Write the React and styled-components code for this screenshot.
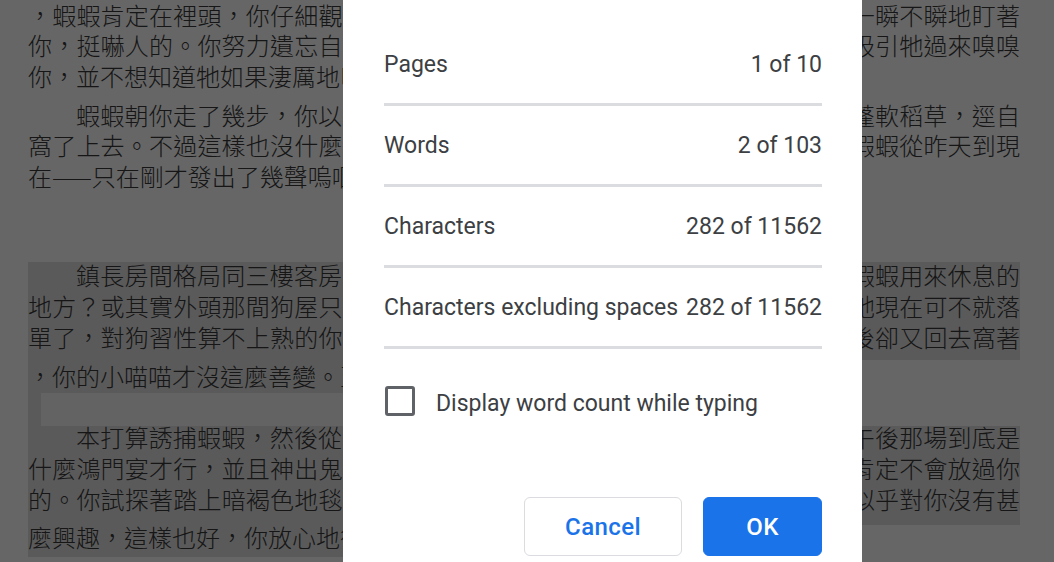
import React from 'react'
import styled, { createGlobalStyle } from 'styled-components'

const GlobalStyle = createGlobalStyle`
  html, body {
    margin: 0;
    padding: 0;
    width: 100%;
    height: 100%;
    overflow: hidden;
    background: #fff;
  }
`

const HIGHLIGHT = '#e1e1e1'
const BLANK = '#f8f8f8'

const Page = styled.div`
  padding-left: 28px;
  width: 992px;
  font-family: "Noto Sans CJK TC", "Noto Sans CJK JP", sans-serif;
  font-size: 24px;
  font-weight: 300;
  color: #383838;
`
const Paragraph = styled.div`
  margin-top: ${props => props.$gap}px;
`
const Line = styled.div`
  height: ${props => props.$h}px;
  line-height: ${props => props.$lh}px;
  white-space: nowrap;
  text-indent: ${props => props.$indent ? '2em' : '0'};
  text-align: ${props => props.$last ? 'left' : 'justify'};
  text-align-last: ${props => props.$last ? 'left' : 'justify'};
  background: ${props => props.$hl === 'full' ? HIGHLIGHT : 'transparent'};
`
const Mark = styled.span`
  display: inline-block;
  height: ${props => props.$h}px;
  vertical-align: top;
  background: ${HIGHLIGHT};
`
const EmptyLine = styled.div`
  display: flex;
  height: 33px;
`
const EmptyStrip = styled.div`
  width: 13px;
  background: ${HIGHLIGHT};
`
const EmptyBox = styled.div`
  width: 560px;
  background: ${BLANK};
`

const Backdrop = styled.div`
  position: fixed;
  inset: 0;
  background: rgba(0, 0, 0, 0.6);
  z-index: 1;
`
const Dialog = styled.div`
  position: fixed;
  top: 0;
  bottom: -20px;
  left: 343px;
  width: 519px;
  box-sizing: border-box;
  padding: 25px 40px 0 41px;
  background: #fff;
  z-index: 2;
  font-family: Roboto, "Liberation Sans", sans-serif;
  color: #3c4043;
`
const StatRow = styled.div`
  display: flex;
  justify-content: space-between;
  align-items: center;
  height: 78px;
  border-bottom: 3px solid #dadce0;
  font-size: 23px;
`
const CheckRow = styled.label`
  display: flex;
  align-items: flex-start;
  height: 30px;
  margin-top: 37px;
  font-size: 23px;
  cursor: pointer;
`
const Checkbox = styled.input`
  appearance: none;
  margin: 0 0 0 1px;
  width: 30px;
  height: 30px;
  box-sizing: border-box;
  border: 3px solid #5f6368;
  border-radius: 3px;
  background: #fff;
`
const CheckLabel = styled.span`
  margin-left: 21px;
  margin-top: 3px;
  line-height: 30px;
`
const Actions = styled.div`
  display: flex;
  justify-content: flex-end;
  gap: 21px;
  margin-top: 81px;
`
const Button = styled.button`
  height: 59px;
  width: ${props => props.$width}px;
  box-sizing: border-box;
  border-radius: 6px;
  border: 1px solid ${props => props.$primary ? '#1a73e8' : '#dadce0'};
  background: ${props => props.$primary ? '#1a73e8' : '#fff'};
  color: ${props => props.$primary ? '#fff' : '#1a73e8'};
  font-family: Roboto, "Liberation Sans", sans-serif;
  font-weight: 500;
  font-size: 24px;
  letter-spacing: 0.4px;
  cursor: pointer;
`

const paragraphs = [
  {
    gap: 0,
    lines: [
      { text: '，蝦蝦肯定在裡頭，你仔細觀察了好一會兒，這才發現那雙烏溜溜的眼睛正在一瞬不瞬地盯著', h: 30, lh: 30 },
      { text: '你，挺嚇人的。你努力遺忘自己身上的貓味，深怕一個不小心就會散發出什麼吸引牠過來嗅嗅', h: 30, lh: 30 },
      { text: '你，並不想知道牠如果淒厲地叫起來會是什麼模樣。', h: 32, lh: 32, last: true }
    ]
  },
  {
    gap: 8,
    lines: [
      { text: '蝦蝦朝你走了幾步，你以為牠要撲過來，沒想到牠只是轉身走向角落那堆蓬軟稻草，逕自', h: 30, lh: 30, indent: true },
      { text: '窩了上去。不過這樣也沒什麼不好，你也落得輕鬆。話說回來，這狗挺安靜，蝦蝦從昨天到現', h: 30, lh: 30 },
      { text: '在——只在剛才發出了幾聲嗚咽。', h: 32, lh: 32, last: true }
    ]
  },
  {
    gap: 70,
    lines: [
      { text: '鎮長房間格局同三樓客房差不多，你環顧四周，卻沒看見任何像是專門給蝦蝦用來休息的', h: 29, lh: 26, indent: true, hl: 'full' },
      { text: '地方？或其實外頭那間狗屋只是擺好看的？要是鎮長平時把蝦蝦鎖在外頭，那牠現在可不就落', h: 30, lh: 30, hl: 'full' },
      { text: '單了，對狗習性算不上熟的你，也搞不清楚牠是不是剛才出去溜達了一圈，然後卻又回去窩著', h: 39, lh: 32, hl: 'full' },
      { text: '，你的小喵喵才沒這麼善變。至少你是這麼覺得的。', h: 33, lh: 32, last: true, hl: 'part' }
    ]
  },
  { empty: true },
  {
    gap: 0,
    lines: [
      { text: '本打算誘捕蝦蝦，然後從牠口中問出點什麼，好比說鎮長和那群客人今天午後那場到底是', h: 26, lh: 22, indent: true, hl: 'full' },
      { text: '什麼鴻門宴才行，並且神出鬼沒地溜進房裡。可你也清楚，要是被發現，蝦蝦肯定不會放過你', h: 32, lh: 32, hl: 'full' },
      { text: '的。你試探著踏上暗褐色地毯，一步、兩步、三步……見蝦蝦仍趴在原處，牠似乎對你沒有甚', h: 41, lh: 30, hl: 'full' },
      { text: '麼興趣，這樣也好，你放心地往床邊走去。', h: 32, lh: 24, last: true, hl: 'part' }
    ]
  }
]

const DocLine = ({ line }) => (
  <Line $h={line.h} $lh={line.lh} $indent={line.indent} $last={line.last} $hl={line.hl}>
    {line.hl === 'part' ? <Mark $h={line.h}>{line.text}</Mark> : line.text}
  </Line>
)

const stats = [
  { label: 'Pages', value: '1 of 10' },
  { label: 'Words', value: '2 of 103' },
  { label: 'Characters', value: '282 of 11562' },
  { label: 'Characters excluding spaces', value: '282 of 11562' }
]

const App = () => (
  <>
    <GlobalStyle />
    <Page>
      {paragraphs.map((p, i) => p.empty ? (
        <EmptyLine key={i}>
          <EmptyStrip />
          <EmptyBox />
        </EmptyLine>
      ) : (
        <Paragraph key={i} $gap={p.gap}>
          {p.lines.map((line, j) => <DocLine key={j} line={line} />)}
        </Paragraph>
      ))}
    </Page>
    <Backdrop />
    <Dialog role='dialog' aria-label='Word count'>
      {stats.map(s => (
        <StatRow key={s.label}>
          <span>{s.label}</span>
          <span>{s.value}</span>
        </StatRow>
      ))}
      <CheckRow>
        <Checkbox type='checkbox' />
        <CheckLabel>Display word count while typing</CheckLabel>
      </CheckRow>
      <Actions>
        <Button $width={158}>Cancel</Button>
        <Button $width={119} $primary>OK</Button>
      </Actions>
    </Dialog>
  </>
)

export default App
